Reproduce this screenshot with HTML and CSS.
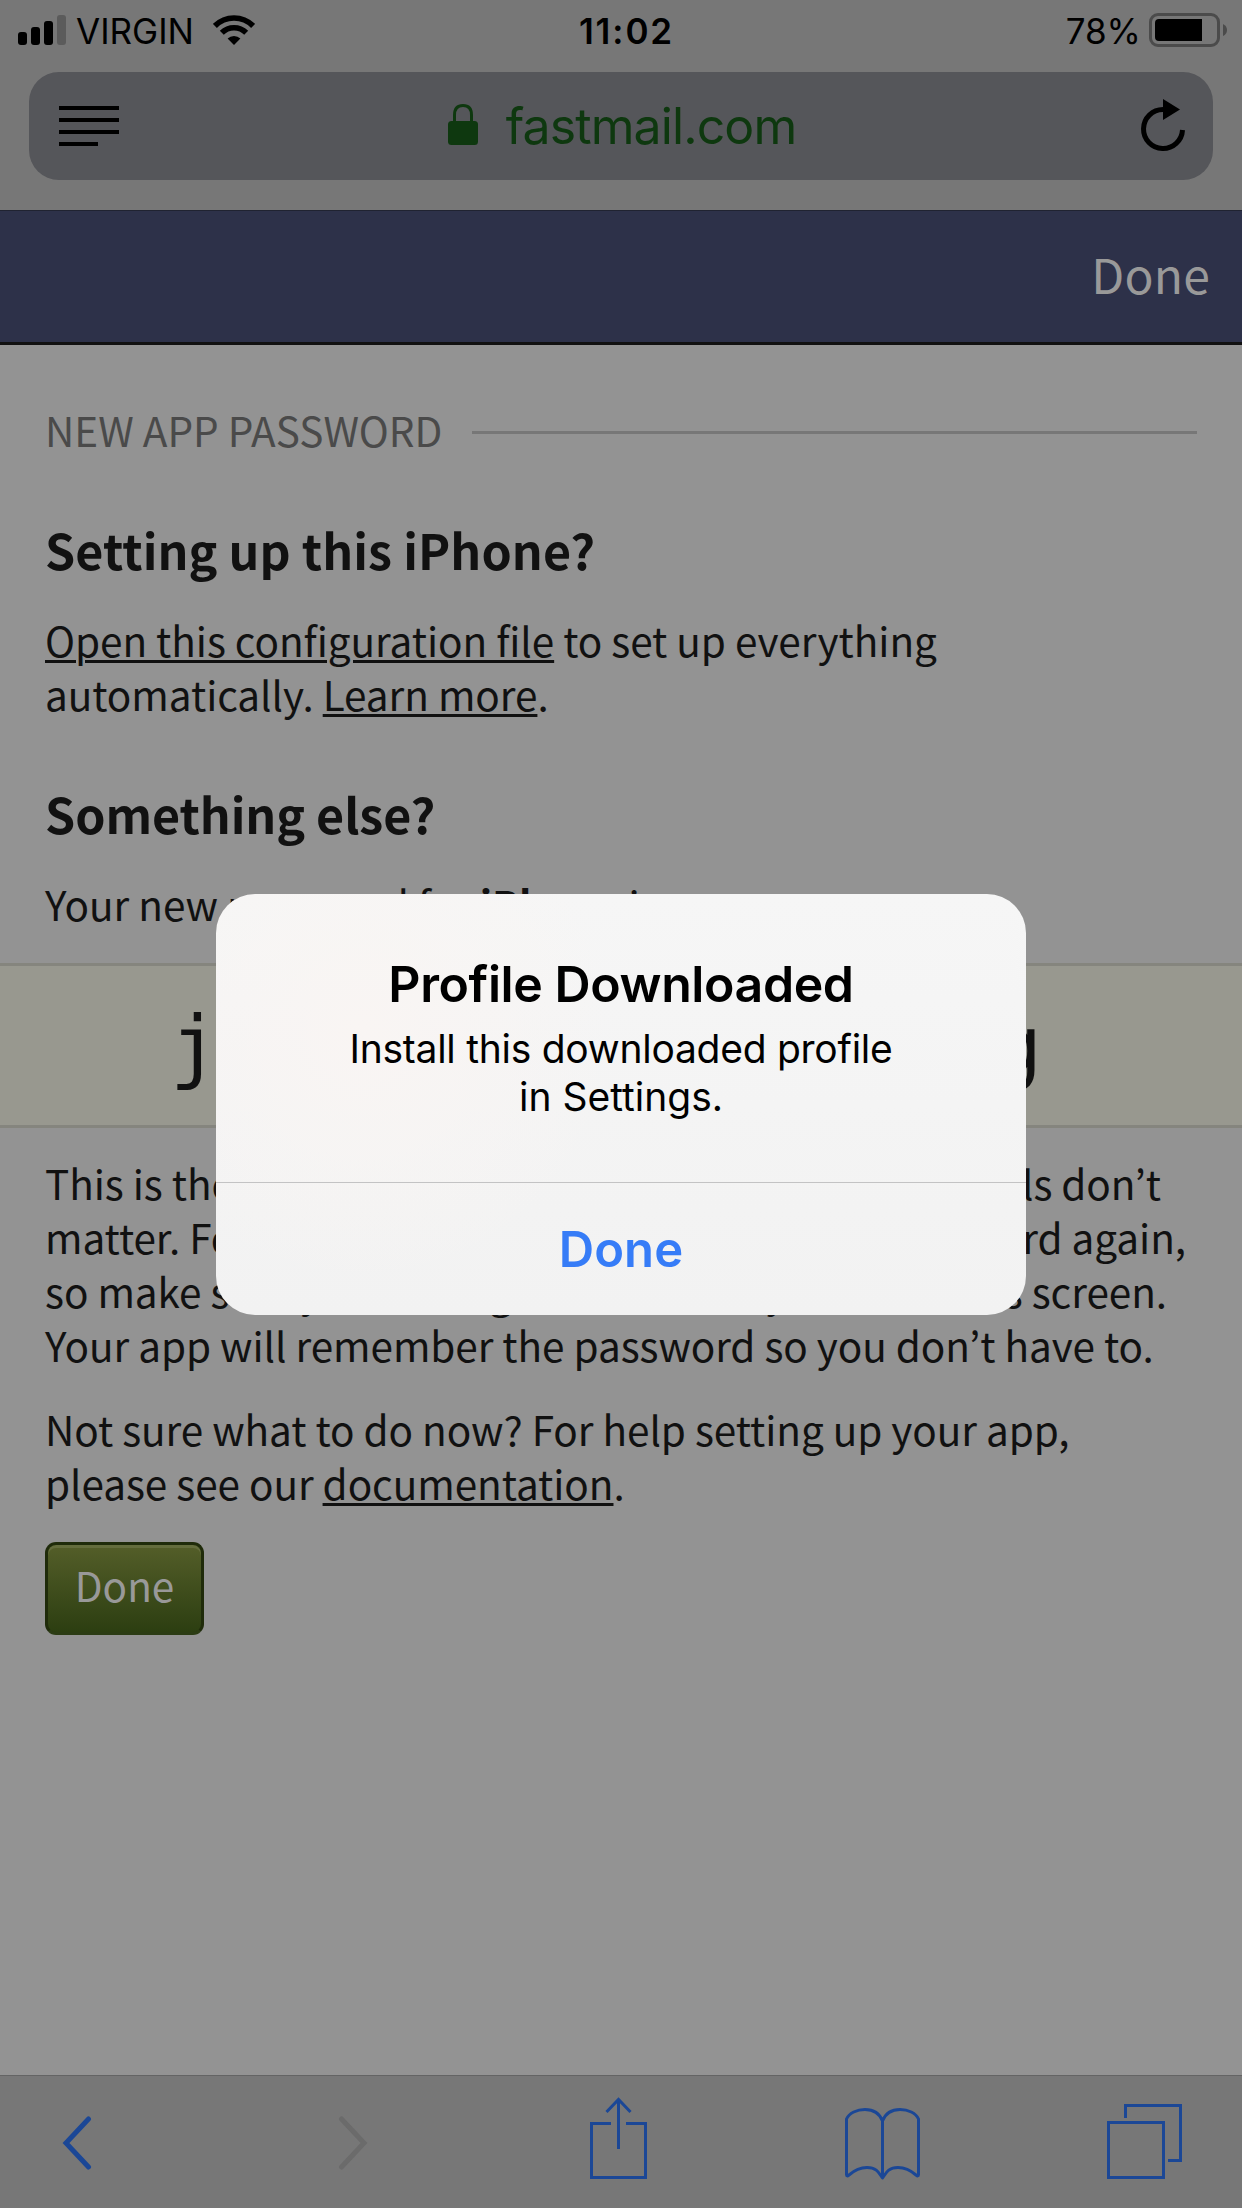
FILE: index.html
```
<!DOCTYPE html>
<html lang="en">
<head>
<meta charset="utf-8">
<title>New app password</title>
<link rel="stylesheet" href="styles.css">
</head>
<body>
<div class="phone">
  <header class="chrome">
    <div class="status">
      <div class="status-left">
        <svg class="signal" width="48" height="30" viewBox="0 0 48 30"><rect y="17" width="9" height="13" rx="3"/><rect x="13" y="12" width="9" height="18" rx="3"/><rect x="26" y="6" width="9" height="24" rx="3"/><rect x="39" width="9" height="30" rx="3" fill="#5b5b5b"/></svg>
        <span class="carrier">VIRGIN</span>
        <svg class="wifi" width="42" height="30" viewBox="0 0 42 30"><g fill="none" stroke="#000" stroke-width="5.6"><path d="M1.9 10.9A27 27 0 0 1 40.1 10.9"/><path d="M8.8 17.8A17.3 17.3 0 0 1 33.2 17.8"/></g><path d="M21 30L14.6 23.6A9 9 0 0 1 27.4 23.6Z"/></svg>
      </div>
      <span class="clock">11:02</span>
      <div class="status-right">
        <span class="percent">78%</span>
        <svg class="battery" width="79" height="34" viewBox="0 0 79 34"><rect x="1.500" y="1.500" width="68" height="31" rx="7.500" fill="none" stroke="#4b4b4b" stroke-width="3"/><path d="M10 6H53V28H10Q6 28 6 24V10Q6 6 10 6Z"/><path d="M74 11Q78 13 78 17T74 23Z" fill="#4b4b4b"/></svg>
      </div>
    </div>
    <div class="address">
      <svg class="reader" width="60" height="40" viewBox="0 0 60 40"><path d="M0 0H60V4H0ZM0 12H60V16H0ZM0 24H60V28H0ZM0 36H39V40H0Z"/></svg>
      <div class="site">
        <svg class="lock" width="30" height="41" viewBox="0 0 30 41"><rect y="17" width="30" height="24" rx="3.500" fill="#0e380f"/><path d="M6.500 18V11Q6.500 1.500 15 1.500T23.500 11V18" fill="none" stroke="#0e380f" stroke-width="3"/></svg>
        <span class="domain">fastmail.com</span>
      </div>
      <svg class="reload" width="46" height="54" viewBox="0 0 46 54"><path d="M42.500 31A19.500 19.500 0 1 1 23 10.500" fill="none" stroke="#000" stroke-width="5"/><path d="M23 0L40 10.500L23 21Z"/></svg>
    </div>
  </header>

  <nav class="appbar"><span>Done</span></nav>

  <main class="page">
    <div class="legend"><span>NEW APP PASSWORD</span><i class="rule"></i></div>
    <h2 class="first">Setting up this iPhone?</h2>
    <p class="intro"><a>Open this configuration file</a> to set up everything<br>automatically. <a>Learn more</a>.</p>
    <h2>Something else?</h2>
    <p class="label">Your new password for <b>iPhone</b> is:</p>
    <div class="password"><span>j</span><span>g</span></div>
    <div class="note">
      <div class="line line-1"><span>This is the</span><span>actual password, but spaces and</span><span>capitals don’t</span></div>
      <div class="line line-2"><span>matter. For</span><span>security, you won’t see this</span><span>password again,</span></div>
      <div class="line line-3"><span>so make sure you</span><span>configure it before</span><span>you leave this screen.</span></div>
      <div>Your app will remember the password so you don’t have to.</div>
    </div>
    <p class="help">Not sure what to do now? For help setting up your app,<br>please see our <a>documentation</a>.</p>
    <button class="green">Done</button>
  </main>

  <footer class="toolbar">
    <svg class="back" width="30" height="60" viewBox="0 0 30 60"><path d="M26.500 6L4 30L26.500 54" fill="none" stroke="#1b4796" stroke-width="5" stroke-linecap="round"/></svg>
    <svg class="forward" width="30" height="60" viewBox="0 0 30 60"><path d="M3.500 6L26 30L3.500 54" fill="none" stroke="#6b6b6b" stroke-width="5" stroke-linecap="round"/></svg>
    <svg class="share" width="57" height="84" viewBox="0 0 57 84"><g fill="none" stroke="#1b4796" stroke-width="3"><path d="M21 27.500H1.500V81.500H55.500V27.500H36M28.500 3V53"/><path d="M16.500 16L28.500 3.500L40.500 16"/></g></svg>
    <svg class="book" width="75" height="74" viewBox="0 0 75 74"><path d="M37.500 71V14M37.500 14C34 5 27 2.500 20 2.500C12 2.500 4 6 1.500 12V67.500Q1.500 70 4 68C12 61 18 60.500 22 60.500C32 60.500 34 66 37.500 71C41 66 43 60.500 53 60.500C57 60.500 63 61 71 68Q73.500 70 73.500 67.500V12C71 6 63 2.500 55 2.500C48 2.500 41 5 37.500 14" fill="none" stroke="#1b4796" stroke-width="3" stroke-linejoin="round"/></svg>
    <svg class="tabs" width="75" height="75" viewBox="0 0 75 75"><path d="M1.500 18.500H56.500V73.500H1.500ZM18.500 14V1.500H73.500V56.500H61" fill="none" stroke="#1b4796" stroke-width="3"/></svg>
  </footer>

  <div class="alert">
    <div class="alert-body">
      <h1>Profile Downloaded</h1>
      <p>Install this downloaded profile<br><span>in Settings.</span></p>
    </div>
    <div class="alert-action">Done</div>
  </div>
</div>
</body>
</html>
```
FILE: styles.css
```
* { box-sizing: border-box; }
body { margin: 0; }
h1, h2, p { margin: 0; }
svg { display: block; flex: none; }

.phone {
  position: relative;
  width: 1242px;
  height: 2208px;
  display: flex;
  flex-direction: column;
  overflow: hidden;
  background: #939393;
  color: #111;
  font: 40.5px/54px "Noto Sans CJK JP", "Noto Sans", sans-serif;
}

/* Browser chrome */
.chrome {
  height: 211px;
  flex: none;
  background: #777;
  border-bottom: 1px solid #202331;
  color: #000;
  font-family: Inter, "Liberation Sans", sans-serif;
}
.status {
  height: 72px;
  display: grid;
  grid-template-columns: 1fr auto 1fr;
  padding: 0 14px 0 18px;
  font-size: 35px;
  line-height: 62px;
}
.status-left, .status-right { display: flex; }
.status-right { justify-content: flex-end; }
.signal { margin-top: 15px; }
.carrier { width: 147px; padding-left: 10px; }
.wifi { margin-top: 15px; }
.clock { font-weight: 600; letter-spacing: 1.9px; padding-left: 7px; }
.battery { margin: 13px 0 0 8px; }
.address {
  display: flex;
  justify-content: space-between;
  align-items: center;
  height: 108px;
  margin: 0 29px;
  padding: 0 27px 0 30px;
  border-radius: 30px;
  background: #55565a;
}
.site { display: flex; align-items: center; color: #0e380f; margin-right: 15px; }
.lock { margin: -3px 28px 0 0; }
.domain { font-size: 50px; line-height: 108px; letter-spacing: -.9px; }

/* Application header */
.appbar {
  height: 134px;
  flex: none;
  display: flex;
  justify-content: flex-end;
  padding-right: 32px;
  border-bottom: 3px solid #111;
  background: #2d3149;
  color: #999;
  font-size: 48px;
  line-height: 125px;
  letter-spacing: .2px;
}

/* Page */
.page { flex: 1; padding: 58px 45px 0; letter-spacing: -.06px; }
.legend { display: flex; align-items: center; color: #4a4a4a; letter-spacing: 0; }
.rule { flex: 1; height: 3px; margin: 5px 0 0 30px; background: #777; }
h2 { font-size: 48.4px; line-height: 60px; letter-spacing: -.05px; }
.first { margin-top: 62px; letter-spacing: .08px; }
.intro { margin-top: 34px; }
.intro + h2 { margin-top: 62px; }
.label { margin-top: 34px; }
a { text-decoration: underline; text-decoration-thickness: 3px; text-underline-offset: 3px; }
.password {
  display: flex;
  justify-content: space-between;
  height: 165px;
  margin: 32px -45px 28px;
  padding: 0 200px 0 170px;
  border-top: 3px solid #85857e;
  border-bottom: 3px solid #85857e;
  background: #98988f;
  font: 81px/159px "DejaVu Sans Mono", monospace;
  letter-spacing: 0;
}
.note, .help { white-space: nowrap; }
.line { display: flex; justify-content: space-between; }
.line-1 { width: 1116px; }
.line-2 { width: 1141px; }
.line-3 { width: 1122px; }
.help { margin-top: 30px; }
.green {
  display: block;
  width: 159px;
  height: 93px;
  margin-top: 32px;
  padding: 0 0 8px;
  border: 3px solid #1f2b0a;
  border-bottom-color: #2c3c14;
  border-radius: 11px;
  background: linear-gradient(#545e29, #2c3e11);
  box-shadow: inset 0 3px #646d3d;
  color: #999;
  font: inherit;
}

/* Browser toolbar */
.toolbar {
  height: 133px;
  flex: none;
  display: flex;
  align-items: center;
  padding: 2px 0 0 62px;
  border-top: 1px solid #646464;
  background: #777;
}
.forward { margin-left: 246px; }
.share { margin: 0 0 10px 222px; }
.book { margin: 2px 0 0 198px; }
.tabs { margin: 0 0 3px 187px; }

/* Alert dialog */
.alert {
  position: absolute;
  left: 216px;
  top: 894px;
  width: 810px;
  height: 421px;
  border-radius: 39px;
  background: radial-gradient(circle at 18% 32%, #f9f5f3 0, rgba(249,245,243,0) 35%), linear-gradient(#f6f6f6, #f2f2f2);
  color: #000;
  font-family: Inter, "Liberation Sans", sans-serif;
  text-align: center;
}
.alert-body { height: 289px; padding-top: 60px; border-bottom: 1px solid #c3c3c4; }
.alert h1 { font-size: 50px; font-weight: 600; line-height: 60px; letter-spacing: -.4px; }
.alert p { margin-top: 11px; font-size: 39px; line-height: 48px; letter-spacing: -.26px; }
.alert p span { letter-spacing: 0; }
.alert-action { padding-top: 1px; color: #367cf7; font-size: 49px; font-weight: 600; line-height: 132px; letter-spacing: .1px; }
```
